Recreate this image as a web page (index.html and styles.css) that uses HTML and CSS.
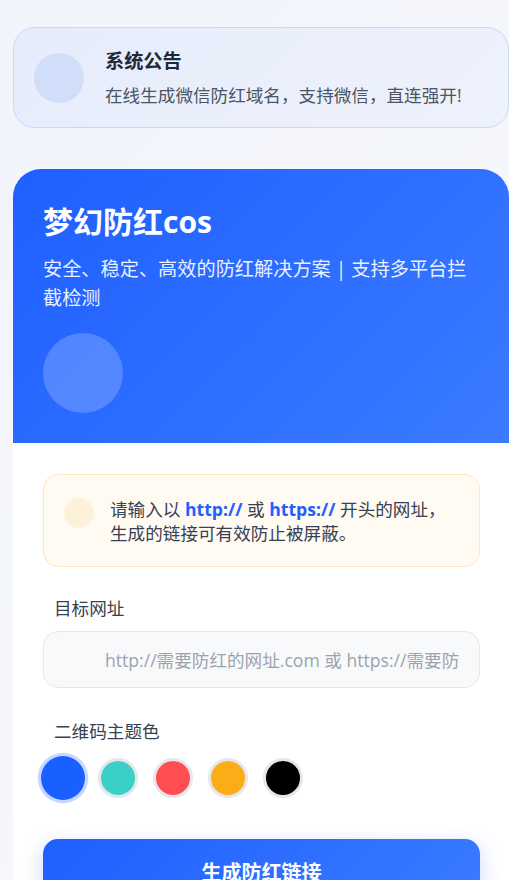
FILE: index.html
```html
<!DOCTYPE html>
<html lang="zh-CN">
<head>
  <meta charset="UTF-8" />
  <meta name="viewport" content="width=device-width, initial-scale=1.0"/>
  <title>梦幻防红cos</title>
  <link rel="stylesheet" href="styles.css">
</head>
<body>
  <div class="page">
    <div class="notice">
      <div class="notice-icon"></div>
      <div class="notice-text">
        <h3>系统公告</h3>
        <p>在线生成微信防红域名，支持微信，直连强开!</p>
      </div>
    </div>

    <div class="main-card">
      <div class="card-header">
        <h1>梦幻防红cos</h1>
        <p>安全、稳定、高效的防红解决方案 | 支持多平台拦截检测</p>
        <div class="header-logo"></div>
      </div>

      <div class="card-body">
        <div class="tip">
          <div class="tip-icon"></div>
          <p>请输入以 <b>http://</b> 或 <b>https://</b> 开头的网址，生成的链接可有效防止被屏蔽。</p>
        </div>

        <div class="form-group">
          <label for="targetUrl">目标网址</label>
          <input type="text" id="targetUrl" placeholder="http://需要防红的网址.com 或 https://需要防红的网址.com">
        </div>

        <div class="form-group">
          <label>二维码主题色</label>
          <div class="colors">
            <span class="color active" style="background: #1a5fff;"></span>
            <span class="color" style="background: #3ad0c8;"></span>
            <span class="color" style="background: #ff4d52;"></span>
            <span class="color" style="background: #fbad18;"></span>
            <span class="color" style="background: #000000;"></span>
          </div>
        </div>

        <button type="button" class="submit-button">生成防红链接</button>
      </div>
    </div>
  </div>
</body>
</html>
```

FILE: styles.css
```css
* {
  margin: 0;
  padding: 0;
  box-sizing: border-box;
  font-family: 'Open Sans', 'Noto Sans CJK SC', sans-serif;
}

html, body {
  overflow: hidden;
}

body {
  background: linear-gradient(135deg, #f1f4fb 0%, #f8f9fc 100%);
  min-height: 100vh;
}

.page {
  width: 496px;
  margin-left: 13px;
  padding-top: 27px;
}

.notice {
  display: flex;
  align-items: center;
  height: 101px;
  padding: 0 20px;
  border: 1px solid #c9d8fb;
  border-radius: 22px;
  background: linear-gradient(135deg, #e6ecfb 0%, #eef2fb 100%);
  margin-bottom: 41px;
}

.notice-icon {
  width: 50px;
  height: 50px;
  border-radius: 50%;
  background-color: #d1def9;
  flex-shrink: 0;
  margin-right: 21px;
}

.notice-text h3 {
  color: #1f2937;
  font-size: 19.2px;
  font-weight: 700;
  line-height: 26px;
  margin-top: 0;
}

.notice-text p {
  color: #4b5563;
  font-size: 17.6px;
  line-height: 26px;
  margin-top: 8px;
}

.main-card {
  background-color: white;
  border-radius: 28px 28px 0 0;
  overflow: hidden;
}

.card-header {
  background: linear-gradient(135deg, #1f5fff 0%, #3a7bff 100%);
  padding: 32px 28px 30px 30px;
  color: white;
}

.card-header h1 {
  font-size: 30px;
  font-weight: 700;
  line-height: 42px;
}

.card-header p {
  font-size: 19.2px;
  line-height: 29px;
  opacity: 0.9;
  margin-top: 11px;
}

.header-logo {
  width: 80px;
  height: 80px;
  border-radius: 50%;
  background-color: rgba(255, 255, 255, 0.2);
  margin-top: 21px;
}

.card-body {
  padding: 31px 29px 40px 30px;
}

.tip {
  display: flex;
  align-items: flex-start;
  padding: 22px 20px 21px 20px;
  background-color: #fffaf2;
  border: 1px solid #fde8c4;
  border-radius: 15px;
  margin-bottom: 29px;
}

.tip-icon {
  width: 30px;
  height: 30px;
  border-radius: 50%;
  background-color: #fdf1da;
  flex-shrink: 0;
  margin: 1px 16px 0 0;
}

.tip p {
  color: #374151;
  font-size: 17.6px;
  line-height: 24px;
}

.tip b {
  color: #1f5fff;
  font-weight: 700;
}

.form-group {
  margin-bottom: 31px;
}

.form-group label {
  display: block;
  color: #374151;
  font-size: 17.6px;
  line-height: 24px;
  padding-left: 11px;
  margin-bottom: 11px;
}

.form-group input {
  width: 100%;
  height: 57px;
  padding: 0 20px 0 61px;
  border: 1px solid #e5e7eb;
  border-radius: 15px;
  background-color: #f8f9fb;
  font-size: 17.6px;
  color: #111827;
}

.form-group input::placeholder {
  color: #9ca3af;
}

.form-group input:focus {
  outline: none;
  border-color: #1f5fff;
}

.colors {
  display: flex;
  align-items: center;
  gap: 15px;
  padding-top: 4px;
}

.color {
  display: block;
  width: 40px;
  height: 40px;
  border-radius: 50%;
  border: 3px solid #e5e7eb;
  cursor: pointer;
}

.color.active {
  border: none;
  transform: scale(1.1);
  box-shadow: 0 0 0 3px rgba(31, 95, 255, 0.25);
}

.submit-button {
  width: 100%;
  height: 64px;
  margin-top: 10px;
  border: none;
  border-radius: 15px;
  background: linear-gradient(135deg, #1f5fff 0%, #3a7bff 100%);
  color: white;
  font-size: 20px;
  font-weight: 700;
  box-shadow: 0 6px 20px rgba(31, 95, 255, 0.25);
  cursor: pointer;
}
```
